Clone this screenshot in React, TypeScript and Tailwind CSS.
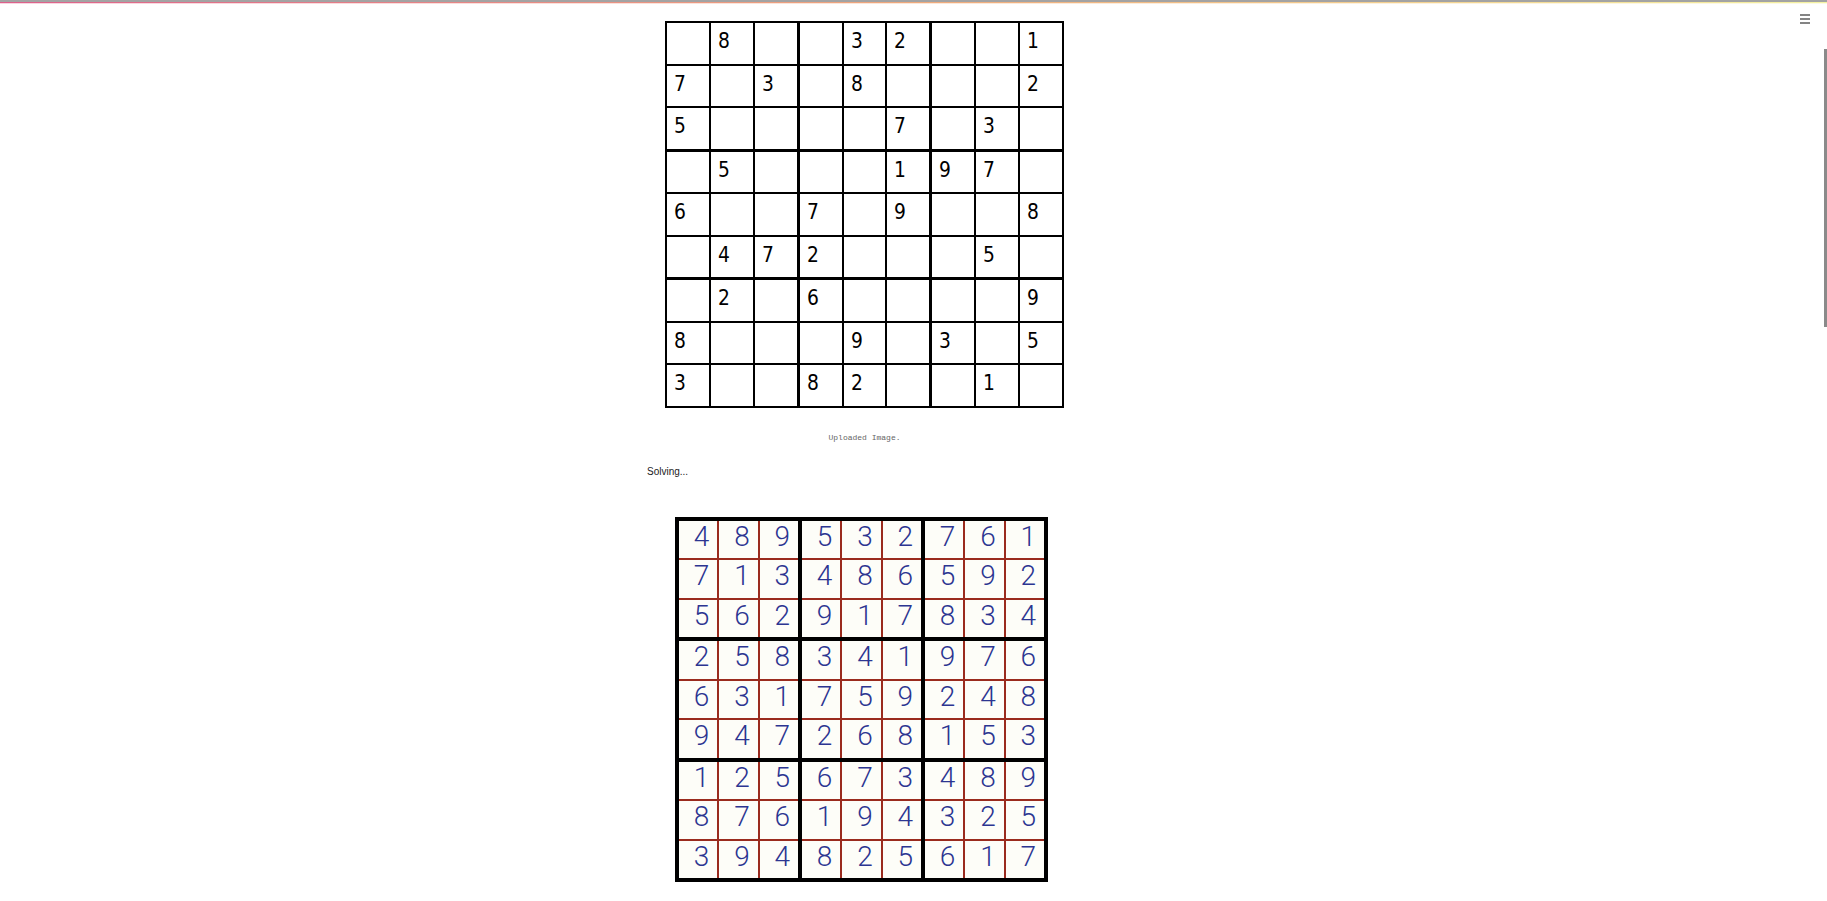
import React from 'react';

const PUZZLE: string[] = [
  '_8__32__1',
  '7_3_8___2',
  '5____7_3_',
  '_5___197_',
  '6__7_9__8',
  '_472___5_',
  '_2_6____9',
  '8___9_3_5',
  '3__82__1_',
];

const SOLUTION: string[] = [
  '489532761',
  '713486592',
  '562917834',
  '258341976',
  '631759248',
  '947268153',
  '125673489',
  '876194325',
  '394825617',
];

// cells of block b (0..8) in reading order
const blockCells = (rows: string[], b: number) => {
  const br = Math.floor(b / 3) * 3;
  const bc = (b % 3) * 3;
  const out: string[] = [];
  for (let r = 0; r < 3; r++) {
    for (let c = 0; c < 3; c++) out.push(rows[br + r][bc + c]);
  }
  return out;
};

const PuzzleGrid: React.FC = () => (
  <div className="grid h-[387px] w-[399px] grid-cols-3 grid-rows-3 gap-[3px] bg-black p-[2px]">
    {Array.from({ length: 9 }).map((_, b) => (
      <div key={b} className="grid grid-cols-3 grid-rows-3 gap-[2px]">
        {blockCells(PUZZLE, b).map((d, i) => (
          <div
            key={i}
            className="bg-white pl-[7px] pt-[7px] font-['DejaVu_Sans',sans-serif] text-[22px] leading-none text-black"
          >
            {d !== '_' && <span className="inline-block origin-left scale-x-[0.85]">{d}</span>}
          </div>
        ))}
      </div>
    ))}
  </div>
);

const SolvedGrid: React.FC = () => (
  <div className="mr-[6px] grid h-[365px] w-[373px] grid-cols-3 grid-rows-3 gap-[4px] bg-black p-[4px]">
    {Array.from({ length: 9 }).map((_, b) => (
      <div key={b} className="grid grid-cols-3 grid-rows-3 gap-[2px] bg-[#9a2b1e]">
        {blockCells(SOLUTION, b).map((d, i) => (
          <div
            key={i}
            className="bg-[#fdfdf8] pr-[8px] pt-[2px] text-right font-['Roboto',sans-serif] text-[28px] font-light leading-none text-[#2c3591]"
          >
            {d}
          </div>
        ))}
      </div>
    ))}
  </div>
);

export default function App() {
  return (
    <div className="relative h-screen overflow-hidden bg-white">
      {/* top strip */}
      <div className="h-[2px] bg-[#a3a3a3]" />
      <div className="h-[1px] bg-gradient-to-r from-[#dc5f8b] via-[#eea97c] to-[#f4f2a2]" />
      <div className="h-[1px] bg-gradient-to-r from-[#f6d5e0] via-[#fbe7d8] to-[#fcfbe4]" />

      <div className="ml-[647px] flex w-[435px] flex-col items-center">
        <div className="mt-[17px]">
          <PuzzleGrid />
        </div>
        <p className="mt-[24px] font-['Liberation_Mono',monospace] text-[8px] leading-[12px] text-[#666]">
          Uploaded Image.
        </p>
        <p className="mt-[21px] self-start font-['Liberation_Sans',sans-serif] text-[10px] leading-[14px] text-[#222]">
          Solving...
        </p>
        <div className="mt-[38px]">
          <SolvedGrid />
        </div>
      </div>

      {/* menu button */}
      <button className="absolute right-[17px] top-[14px] p-0 text-[#333]">
        <svg width="10" height="10" viewBox="0 0 10 10" fill="none" stroke="currentColor" strokeWidth="1.2">
          <line x1="0" y1="1" x2="10" y2="1" />
          <line x1="0" y1="5" x2="10" y2="5" />
          <line x1="0" y1="9" x2="10" y2="9" />
        </svg>
      </button>

      {/* scrollbar thumb */}
      <div className="absolute right-0 top-[49px] h-[278px] w-[3px] bg-[#8a8a8a]" />
    </div>
  );
}
